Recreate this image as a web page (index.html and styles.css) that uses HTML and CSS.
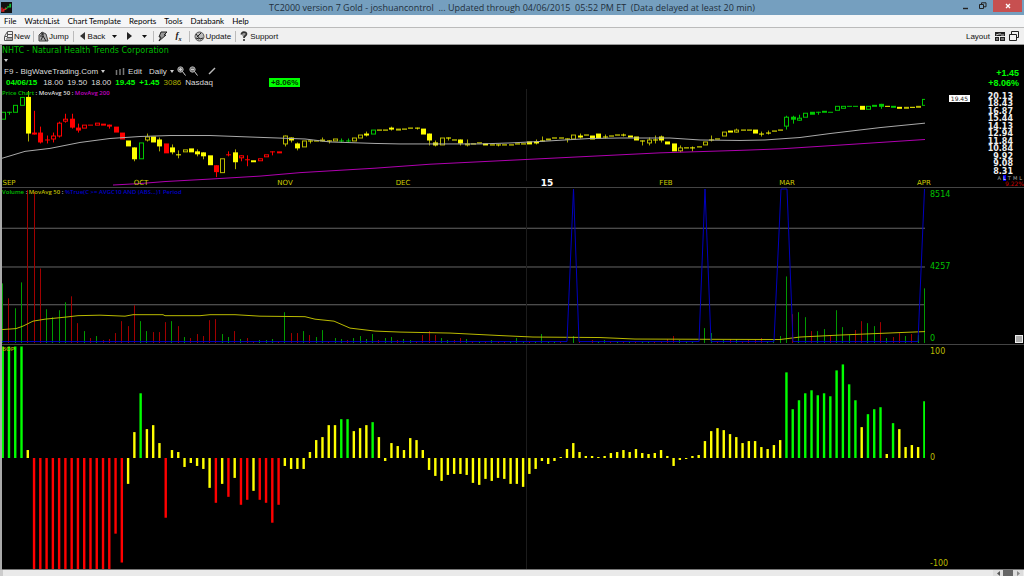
FILE: index.html
```html
<!DOCTYPE html>
<html lang="en">
<head>
<meta charset="utf-8">
<title>TC2000 version 7 Gold</title>
<link rel="stylesheet" href="styles.css">
</head>
<body>
<div class="app">
  <header class="titlebar">
    <svg class="logo" viewBox="0 0 12 12" aria-hidden="true"><rect width="12" height="12" fill="#111"/><path d="M1 6v4h2V8h2V6" fill="none" stroke="#d22" stroke-width="1.5"/><path d="M4 7l3-1V4l2 1V2h2v4H8L6 8z" fill="#1b3"/></svg>
    <h1 class="title">TC2000 version 7 Gold - joshuancontrol &nbsp;... Updated through 04/06/2015 &nbsp;05:52 PM ET &nbsp;(Data delayed at least 20 min)</h1>
    <div class="window-controls">
      <button class="win" aria-label="Minimize"><svg width="7" height="8" viewBox="0 0 7 8"><path d="M1 6.5h5" stroke="#222" stroke-width="1.4"/></svg></button>
      <button class="win" aria-label="Restore"><svg width="8" height="8" viewBox="0 0 8 8" fill="none" stroke="#222"><path d="M.5 2.5h4v4h-4zM2.500 2V.8h4.500v4H5"/></svg></button>
      <button class="win close" aria-label="Close"><svg width="6" height="6" viewBox="0 0 6 6"><path d="M1 1l4 4M5 1L1 5" stroke="#fff" stroke-width="1.3"/></svg></button>
    </div>
  </header>
  <nav class="menu">
    <button>File</button><button>WatchList</button><button>Chart Template</button><button>Reports</button><button>Tools</button><button>Databank</button><button>Help</button>
  </nav>
  <div class="toolbar">
    <button class="tool"><svg width="10" height="11" viewBox="0 0 10 11" fill="none" stroke="#555"><path d="M3.500.5h5v9h-8v-4zM3.500 1v4.500H1M4 3.500h4M3 6.500h5M2 8h6"/></svg>New</button>
    <i class="sep"></i>
    <button class="tool"><svg width="11" height="11" viewBox="0 0 11 11"><path d="M1 10V4l3-3 4 2 2 7z" fill="#aaa" stroke="#444"/><path d="M3 9l2-4 3 5M2 5h4" stroke="#222" fill="none"/><circle cx="4.500" cy="3" r="1.300" fill="#333"/></svg>Jump</button>
    <i class="sep"></i>
    <button class="tool back"><svg width="5" height="8" viewBox="0 0 5 8"><path d="M5 0v8L0 4z" fill="#333"/></svg><span>Back</span><svg width="5" height="3" viewBox="0 0 5 3"><path d="M0 0h5L2.500 3z" fill="#111"/></svg></button>
    <button class="tool next" aria-label="Forward"><svg width="5" height="8" viewBox="0 0 5 8"><path d="M0 0v8l5-4z" fill="#222"/></svg><svg width="5" height="3" viewBox="0 0 5 3"><path d="M0 0h5L2.500 3z" fill="#111"/></svg></button>
    <i class="sep"></i>
    <button class="tool" aria-label="Alerts"><svg width="9" height="11" viewBox="0 0 9 11"><path d="M3 1h6L6 4h2L1 10l2-4H1z" fill="#999" stroke="#222"/></svg></button>
    <button class="tool formula" aria-label="Formula"><i>f<sub>x</sub></i></button>
    <i class="sep"></i>
    <button class="tool"><svg width="11" height="11" viewBox="0 0 11 11"><circle cx="5.500" cy="5.500" r="4.500" fill="#bbb" stroke="#555"/><path d="M2 3l4 5 3-1M3 6l4-4M5 8l-3-1" stroke="#222" fill="none"/></svg>Update</button>
    <i class="sep"></i>
    <button class="tool support"><svg width="8" height="10" viewBox="0 0 8 10"><path d="M1.500 3.500C1 .5 6.500.5 6.500 3c0 2-2.500 1.500-2.500 4" fill="#999" stroke="#333" stroke-width="1.700"/><circle cx="4" cy="9" r="1" fill="#222"/></svg>Support</button>
    <button class="tool layout">Layout <svg width="10" height="9" viewBox="0 0 10 9"><path d="M0 0h10v4H0zM0 5h4v4H0zM5 5h5v4H5z" fill="#222"/><path d="M5 1v2M1 3l3-1M6 3h3M1 7h2M6 7h3" stroke="#ccc"/></svg></button>
    <button class="tool" aria-label="Restore chart"><svg width="10" height="10" viewBox="0 0 10 10" fill="#f4f4f4" stroke="#222"><path d="M2.500 3V.5h7v6H8M.5 3.500h7v6h-7z"/></svg></button>
  </div>

  <main class="workspace">
    <section class="quote">
      <div class="details">
        <h2 class="company">NHTC - Natural Health Trends Corporation</h2>
        <button class="caret" aria-label="Symbol menu"></button>
        <div class="template">
          <button>F9 - BigWaveTrading.Com <i class="down"></i></button>
          <button class="edit"><svg width="10" height="7" viewBox="0 0 10 7"><path d="M1.500 2v5M5 1v6M8.500 0v7" stroke="#777" stroke-width="1.500"/></svg>Edit</button>
          <button>Daily <i class="down"></i></button>
          <button class="lens" aria-label="Zoom in"><svg width="9" height="10" viewBox="0 0 9 10"><circle cx="3.500" cy="3.500" r="2.700" fill="#777" stroke="#aaa"/><path d="M2 3.500h3M3.500 2v3M5.500 5.500l3 4" stroke="#ccc"/></svg></button>
          <button class="lens" aria-label="Zoom out"><svg width="9" height="10" viewBox="0 0 9 10"><circle cx="3.500" cy="3.500" r="2.700" fill="#777" stroke="#aaa"/><path d="M2 3.500h3M5.500 5.500l3 4" stroke="#ccc"/></svg></button>
          <button class="pencil" aria-label="Draw line"><svg width="8" height="8" viewBox="0 0 8 8"><path d="M1 7l6-6" stroke="#bbb" stroke-width="1.400"/></svg></button>
        </div>
        <div class="prices">
          <b class="date">04/06/15</b><span>18.00</span><span>19.50</span><span>18.00</span><b>19.45</b><b>+1.45</b><span class="vol">3086</span><span class="exchange">Nasdaq</span><strong class="badge">+8.06%</strong>
        </div>
      </div>
      <div class="change"><span>+1.45</span><span>+8.06%</span></div>
    </section>

    <section class="pane">
      <svg class="plot" id="price" viewBox="2 89 923 99" preserveAspectRatio="none"></svg>
      <p class="legend"><span class="green">Price Chart</span> : MovAvg 50 : <span class="magenta">MovAvg 200</span></p>
      <div class="months" id="months"></div>
      <div class="axis scale"><span>20.13</span><span>18.43</span><span>16.87</span><span>15.44</span><span>14.13</span><span>12.94</span><span>11.84</span><span>10.84</span><span>9.92</span><span>9.08</span><span>8.31</span>
        <div class="modes"><button>A</button><button class="on">L</button><button>T</button><button>M</button><button>L</button></div>
        <em>9.22%</em>
      </div>
      <span class="tag">19.45</span>
    </section>
    <section class="pane">
      <svg class="plot" id="volume" viewBox="2 188 923 157" preserveAspectRatio="none"></svg>
      <p class="legend"><span class="green">Volume</span> : <span class="yellow">MovAvg 50</span> : <span class="blue">%True(C &gt;= AVGC10 AND (ABS...)1 Period</span></p>
      <div class="axis spread green"><span>8514</span><span>4257</span><span>0</span></div>
      <button class="handle" aria-label="Resize pane"></button>
    </section>
    <section class="pane last-pane">
      <svg class="plot" id="bop" viewBox="2 345 923 225" preserveAspectRatio="none"></svg>
      <p class="legend"><span class="yellow">BOP</span></p>
      <div class="axis spread yellow"><span>100</span><span>0</span><span>-100</span></div>
    </section>
  </main>
  <footer class="scroller">
    <button aria-label="Scroll left"><svg width="3" height="5" viewBox="0 0 3 5"><path d="M3 0v5L0 2.500z" fill="#555"/></svg></button>
    <i class="thumb"></i>
    <button aria-label="Scroll right"><svg width="3" height="5" viewBox="0 0 3 5"><path d="M0 0v5l3-2.500z" fill="#888"/></svg></button>
  </footer>
</div>
<script src="charts.js"></script>
</body>
</html>
```
FILE: styles.css
```css
* { box-sizing: border-box; }
body { margin: 0; background: #000; font-family: "Liberation Sans", Arial, sans-serif; font-size: 8px; }
button { margin: 0; padding: 0; border: 0; background: none; font: inherit; color: inherit; white-space: nowrap; display: flex; align-items: center; }
svg { display: block; }
h1, h2, p { margin: 0; font-weight: normal; }

.app { display: flex; flex-direction: column; height: 100vh; }
.titlebar { flex: none; display: grid; grid-template-columns: 1fr auto 1fr; height: 15px; background: #759fbf; color: #22303c; }
.logo { width: 11px; height: 11px; margin: 2px 0 0 1px; }
.title { font: 9px/15px "Open Sans", sans-serif; white-space: nowrap; }
.window-controls { display: flex; justify-content: flex-end; gap: 10px; padding-right: 2px; }
.win { height: 12px; }
.close { width: 29px; justify-content: center; background: #c75050; margin-left: -4px; }
.menu { flex: none; display: flex; gap: 8px; height: 12px; padding: 0 0 1px 4px; background: #f5f6f7; color: #000; font-family: Lato, sans-serif; font-size: 8px; }
.toolbar { flex: none; display: flex; align-items: center; gap: 4px; height: 18px; padding: 0 5px 0 4px; border-top: 1px solid #bbb; border-bottom: 1px solid #999; background: #f0f0f0; color: #111; }
.tool { height: 14px; }
.support { gap: 2px; }
.sep { width: 1px; height: 11px; background: #bbb; }
.sep:first-of-type { margin-left: -1px; }
.back { gap: 3px; padding: 0 2px; }
.back span { margin-right: 4px; }
.next { gap: 10px; padding: 0 2px 0 4px; }
.formula { width: 14px; justify-content: center; font: bold 9px "Liberation Serif", serif; }
.formula sub { font-size: 6px; }
.layout { margin-left: auto; gap: 5px; }

.workspace { flex: 1; min-height: 0; display: grid; grid-template-rows: 44px 99fr 157fr 225fr; border-left: 2px solid #aaa; background: #000; }
.quote { display: flex; justify-content: space-between; color: #ddd; }
.company { color: #0b0; font: 8px/11px "DejaVu Sans", sans-serif; }
.caret { width: 5px; height: 9px; margin-left: 2px; }
.caret::before, .down { content: ""; border: 2px solid transparent; border-top: 3px solid #ccc; border-bottom: 0; }
.down { margin-left: 3px; }
.template { display: flex; align-items: center; height: 12px; padding-left: 2px; }
.edit { gap: 3px; margin: 0 7px 0 10px; }
.lens { margin-left: 3px; }
.pencil { margin-left: 10px; }
.prices { display: flex; align-items: center; height: 11px; padding-left: 4px; gap: 4px; }
.prices b { color: #0f0; }
.prices .date { margin-right: 2px; }
.prices .vol { color: #aa0; }
.badge { margin-left: 52px; padding: 0 2px; background: #0f0; color: #030; line-height: 9px; }
.change { display: flex; flex-direction: column; padding: 23px 5px 0 0; color: #0f0; font-size: 9px; line-height: 10px; font-weight: bold; text-align: right; }

.pane { position: relative; min-height: 0; display: grid; grid-template-columns: 1fr 99px; border-bottom: 1px solid #444; }
.last-pane { border-bottom-color: #777; }
.plot { height: 100%; position: absolute; inset: 0 99px 0 0; width: calc(100% - 99px); }
.legend { position: absolute; left: 0; top: 0; font: 600 6px/9px "Open Sans", sans-serif; color: #ddd; white-space: nowrap; }
.months { position: absolute; inset: auto 99px 0 0; height: 7px; font: 7px/7px "DejaVu Sans", sans-serif; color: #cc0; }
.months span { position: absolute; transform: translateX(-50%); }
.months .year { color: #fff; font-weight: bold; font-size: 9px; }
.green { color: #00c000; }
.yellow { color: #bb0; }
.magenta { color: #c000c0; }
.blue { color: #0000c8; }
.axis { grid-column: 2; font: 8px/10px "DejaVu Sans", sans-serif; }
.scale { display: flex; flex-direction: column; padding: 4px 11px 0 0; text-align: right; color: #eee; font-weight: bold; font-size: 8px; line-height: 7px; }
.scale > span { flex: 1; min-height: 0; }
.modes { display: flex; flex: none; justify-content: flex-end; gap: 2px; margin-right: -9px; font-size: 5px; line-height: 6px; color: #aaa; font-weight: normal; }
.modes .on { background: #00e; color: #fff; }
.scale em { flex: none; margin-right: -11px; font: 6px/6px "DejaVu Sans", sans-serif; color: #c00; }
.tag { position: absolute; top: 6px; right: 54px; padding: 0 2px; background: #fff; color: #222; font: 6px/7px "DejaVu Sans", sans-serif; }
.spread { display: flex; flex-direction: column; justify-content: space-between; padding: 2px 0 0 5px; }
.handle { position: absolute; right: 1px; bottom: 1px; width: 8px; height: 8px; background: #aaa; border: 1px solid #eee; }
.scroller { flex: none; display: flex; justify-content: flex-end; height: 6px; padding-right: 1px; background: #eaeaea; border-left: 3px solid #ccc; }
.scroller button { width: 10px; justify-content: center; background: #ddd; }
.thumb { width: 10px; background: #666; }
```
FILE: charts.js
```js
const STEP = 6.27, START = 2.7;
const X = i => START + i * STEP;
const COLORS = { g: '#00c800', r: '#f00', y: '#ff0' };

function add(svg, tag, attrs) {
  const el = document.createElementNS('http://www.w3.org/2000/svg', tag);
  for (const k in attrs) el.setAttribute(k, attrs[k]);
  svg.appendChild(el);
}
function rect(svg, x, y, width, height, fill) { add(svg, 'rect', { x, y, width, height, fill }); }
function line(svg, points, stroke, width = 1) {
  add(svg, 'polyline', { points, fill: 'none', stroke, 'stroke-width': width });
}
function yearLine(svg, y1, y2) {
  add(svg, 'line', { x1: 526.5, x2: 526.5, y1, y2, stroke: '#1c1c1c' });
}

/* colour + filled/hollow, body top, body bottom, wick top, wick bottom */
const candles = `gH 112 120;gF 112 113 112 115;gH 105 113;gH 97 106;yF 97 134 91 142;rF 133 135 111 135;rF 133 143 127 144;rF 140 141 136 144;rH 136 140 133 143;rH 123 137 122 138;
rH 119 122 114 123;rF 119 128 114 129;rF 128 131 124 133;rH 125 129;rF 125 126;rH 123 126;rF 124 126;rF 125 127 125 129;rF 127 133;rF 133 140;
yF 141 147;yF 148 160 148 162;gH 143 160;yH 137 141 134 142;yF 137 143;yF 140 147 138 152;rF 144 154;yF 148 153 145 155;yF 155 156 151 159;yH 150 153;
yF 149 153;yF 152 155 150 157;yF 153 157 153 160;yF 156 166;rF 166 173 166 178;yH 159 174;rF 155 156 152 157;yF 153 163 150 170;rH 156 159 156 162;rF 160 161 156 167;
yF 161 163;rH 159 162;rH 155 158;rF 152 153 152 156;rF 152 154;yH 136 145 136 147;yF 138 141 138 143;yF 144 149 143 151;yH 141 148;yF 141 142 141 144;
yF 141 142;yH 140 142 138 142;yF 141 142 141 144;yH 139 142;gF 141 142 139 143;gF 141 142 139 143;yH 138 142;yH 135 139;yF 134 136 132 137;gH 130 135;
yF 130 131;yF 130 131;yF 128 130 127 131;yH 129 131;yF 129 130;yF 128 129;yF 128 129 128 130;yF 129 135;yF 134 141 134 146;yF 143 146 141 147;
yH 138 146;yF 138 139 138 141;yF 140 141;yF 140 144 140 146;yH 144 146 140 147;yF 144 145;yF 143 144;yF 144 146;yF 145 146;yF 145 146 145 147;
yF 145 146;yF 145 146;yF 144 145;yF 144 145;yF 142 145;yF 142 144 140 145;yF 141 142 137 142;yH 139 141;yF 138 139;yF 138 139;
yF 139 140 139 143;yH 135 140;yF 136 138 134 139;yF 135 136;yF 136 140;yF 134 139;yF 137 138 135 139;yF 136 137;yF 135 136;yF 135 136 134 137;
yF 136 138;yF 137 141;yF 141 142 141 146;yH 140 144 138 146;yF 140 141 136 144;yF 137 141 136 143;yF 142 145;yF 144 152;yH 148 152 146 153;yF 148 149;
yF 148 149 147 152;yF 147 148;yH 142 146;yF 140 141 136 142;yF 139 140;yH 132 137;yF 131 133;yH 130 133 129 133;yF 130 131;yF 130 131;
yF 130 134;yF 134 135 132 137;yF 133 134 131 135;yF 131 132;yF 130 131;gH 117 127 116 130;gF 117 120 116 124;gH 118 121 115 121;gH 113 118;gF 112 115;
gF 112 113 112 115;gH 111 113;gF 112 113;gH 106 111;gH 106 109;gF 106 107;gF 106 107;yF 106 110;gH 106 110;gF 105 107;
gF 104 107 104 109;yF 106 107;gF 106 108;yF 107 109;yH 107 109;yF 107 108;yH 106 108;gH 99 106`.split(';').map(s => s.trim().split(/\s+/));

const price = document.getElementById('price');
yearLine(price, 89, 182);
candles.forEach(([kind, ...v], i) => {
  const [top, bottom, wickTop, wickBottom] = v.map(Number);
  const color = COLORS[kind[0]], x = Math.round(X(i) - 2);
  if (wickTop) rect(price, x + 2, wickTop, 1, wickBottom - wickTop, kind[0] === 'y' ? '#aa0' : color);
  if (kind[1] === 'F') rect(price, x, top, 5, bottom - top, color);
  else add(price, 'rect', { x: x + .5, y: top + .5, width: 4, height: Math.max(1, bottom - top - 1), fill: '#000', stroke: kind[0] === 'y' ? '#bb0' : color });
});
line(price, '2,159 25,152 50,149 80,143 110,139 140,137 170,136 210,136 250,137.500 305,139.500 330,142.500 375,144 400,144.500 480,144.500 510,143.500 540,142 590,139 620,138.500 670,138.500 700,140.500 740,141 765,140.500 800,138 830,134 880,128 925,123.500', '#aaa');
line(price, '113,186 140,184.500 165,182.500 210,180 260,177 300,173.500 375,169 430,165 510,161 590,157 660,153.500 740,151 780,149.500 850,145 925,140', '#b000b0');

const months = document.getElementById('months');
[['SEP', 9], ['OCT', 141], ['NOV', 285], ['DEC', 403], ['15', 547], ['FEB', 666], ['MAR', 787], ['APR', 924]].forEach(([label, x]) => {
  const span = document.createElement('span');
  span.textContent = label;
  span.style.left = (x - 2) / 9.23 + '%';
  if (label === '15') span.className = 'year';
  months.appendChild(span);
});

const volumes = `60g 45r 35g 61g 154r 152r 75r 34g 26g 33g 41g 47r 20r 12g 5r 7g 3r 4r 10r 22r 17r 38r 22g 12g 11r 11r 21r 22g 17r 6g
5r 9r 7r 23r 24r 9g 6g 12r 4g 5r 2r 3g 3g 4g 2r 31g 10r 10r 12g 8r 6g 13g 1r 5g 4g 3r 5g 7g 4g 9g
3r 5g 6g 3r 4g 3g 2r 8r 12r 8r 5g 3g 3r 5r 4g 2r 2g 2r 3g 2r 1r 1g 5g 2g 1r 2g 9g 1g 1g 1r
0g 7g 1r 0g 3r 2g 3g 1r 1g 1r 1g 1r 2g 2g 1r 1r 4r 7r 3g 1g 1g 0g 15g 10g 1r 3g 4r 4g 1r 3r
3r 5r 2g 3g 7g 67g 29r 31g 26g 12r 12g 14g 8r 33g 16g 8g 13r 22r 20g 17g 21r 5g 6r 10r 7g 9r 8g 55g`.split(/\s+/);
const volume = document.getElementById('volume');
[228.5, 267.5, 305.5].forEach(y => line(volume, `2,${y} 925,${y}`, '#666'));
yearLine(volume, 188, 344);
volumes.forEach((v, i) => {
  const h = parseInt(v);
  rect(volume, Math.round(X(i) - .5), 344 - h, 1, h, v.endsWith('g') ? '#009a00' : '#a00000');
});
line(volume, '2,330.500 16,329.500 23,327 33,322 45,320 65,318 78,316.500 100,316 125,317 133,315.500 163,315.500 165,316.500 200,316.500 210,315.500 235,315.500 260,317 305,317.500 315,320 334,322 350,329 375,332 400,333 450,334 500,336.500 533,338 600,338.500 635,340 780,340.500 800,338 840,336 900,333.500 925,332.500', '#bb0');
line(volume, '2,342.500 567,342.500 573.500,189 579,342.500 699,342.500 705,189 711,342.500 774,342.500 781,189 787,189 793,342.500 918,342.500 924.500,189', '#0000c0');

const balance = `112g 112g 112g 112g 8y -112r -112r -112r -112r -112r -112r -112r -112r -112r -112r -112r -112r -112r -76r -105r
-26y 26y 65g 29y 33y 15y -60r 8y 6y -9y -5y -8y -11y -30y -45r -26y -39r -20y -47r -42r -33y -42r -45r -65r -47r -8y -11y -11y -11y 6y
18y 21y 33y 33y 39g 39g 27y 30y 33y 36g 21y -3y 15y 12y 8y 20y 18y 8y -12y -18y -23y -17y -16y -16y -17y -25y -27y -21y -23y -20y
-21y -26y -26y -29y -16y -11y -3y -6y -3y 1y 9y 15y 6y 2y 2y 1y 2y 5y 6y 8y 6y 9y 5y 4y 5y 8y 2y -8y -2y -1y
2y 3y 17y 27y 30y 28y 24y 21y 15y 17y 17y 11y 9y 13y 18y 86g 49g 58g 65g 68g 63g 65g 62g 88g 94g 74g 58g 31y 44g 49g
51g 4y 35g 29y 11y 13y 11y 57g`.split(/\s+/);
const bop = document.getElementById('bop');
yearLine(bop, 345, 570);
balance.forEach((v, i) => {
  const h = parseInt(v), c = v.slice(-1);
  rect(bop, X(i) - 1.2, h > 0 ? 458.5 - h : 458.5, 2.4, Math.abs(h), c === 'g' ? '#0f0' : COLORS[c]);
});
```
